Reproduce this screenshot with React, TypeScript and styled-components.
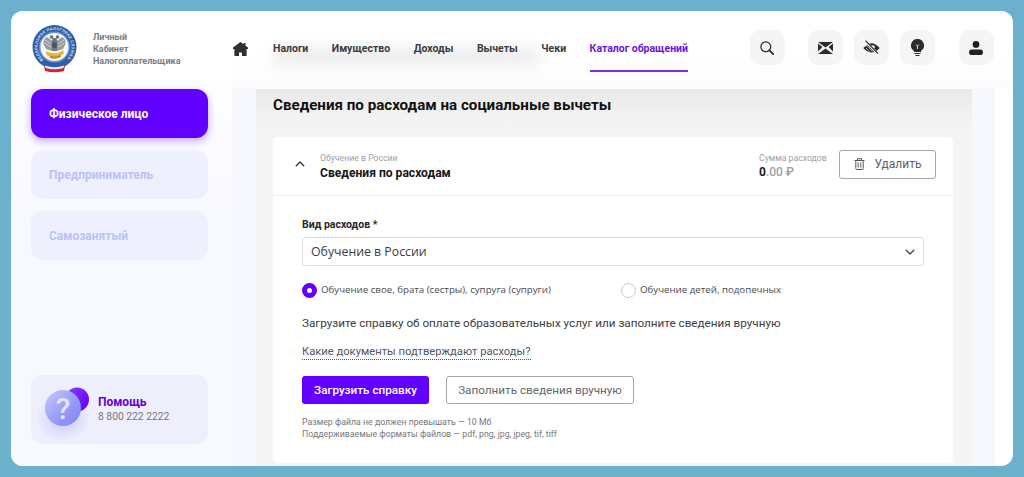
import React from 'react';
import styled, { createGlobalStyle } from 'styled-components';

const GlobalStyle = createGlobalStyle`
  html, body { margin: 0; padding: 0; height: 100%; overflow: hidden; }
  body { background: #6bb0cc; font-family: Roboto, "Liberation Sans", sans-serif; }
  * { box-sizing: border-box; }
`;

const Page = styled.div`
  height: 477px;
  padding: 11px 11px 11px 11px;
`;

const Window = styled.div`
  display: flex;
  width: 1002px;
  height: 455px;
  border-radius: 12px;
  overflow: hidden;
  background: #fff;
`;

const Sidebar = styled.aside`
  display: flex;
  flex-direction: column;
  width: 221px;
  padding: 0 24px 22px 20px;
  background: linear-gradient(180deg, #fff 0, #fff 60px, #f8f8ff 200px);
`;

const Brand = styled.div`
  display: flex;
  align-items: center;
  height: 78px;
  padding: 0 0 3px 1px;
  flex: none;
`;

const BrandText = styled.div`
  margin-left: 16px;
  font-size: 9px;
  font-weight: 700;
  line-height: 12px;
  color: #7b7b85;
`;

const SideNav = styled.nav`
  display: flex;
  flex-direction: column;
  gap: 12px;
`;

const SideItem = styled.div<{ $active?: boolean }>`
  display: flex;
  align-items: center;
  height: 49px;
  padding-left: 18px;
  border-radius: 12px;
  font-size: 12px;
  font-weight: 700;
  color: ${p => (p.$active ? '#fff' : '#bcc2f4')};
  background: ${p => (p.$active ? '#6200ff' : '#eff0fe')};
  box-shadow: ${p => (p.$active ? '0 3px 9px rgba(98, 0, 255, 0.35)' : 'none')};
`;

const HelpCard = styled.div`
  display: flex;
  align-items: center;
  gap: 9px;
  height: 69px;
  margin-top: auto;
  padding-left: 12px;
  border-radius: 12px;
  background: #efeffc;
`;

const HelpTitle = styled.div`
  font-size: 12px;
  font-weight: 700;
  line-height: 14px;
  color: #6200e0;
`;

const HelpPhone = styled.div`
  margin-top: 1px;
  font-size: 10.3px;
  line-height: 14px;
  color: #76767f;
`;

const Main = styled.div`
  display: flex;
  flex-direction: column;
  flex: 1;
  min-width: 0;
`;

const Header = styled.header`
  position: relative;
  display: flex;
  align-items: flex-start;
  height: 78px;
  flex: none;
  background: linear-gradient(180deg, #fff 0, #fff 50%, #fcfcfe 100%);
`;

const NavBlur = styled.div`
  position: absolute;
  left: 40px;
  top: 38px;
  width: 268px;
  height: 14px;
  border-radius: 8px;
  background: rgba(0, 0, 0, 0.09);
  filter: blur(8px);
`;

const HomeLink = styled.div`
  position: relative;
  width: 41px;
  height: 74px;
  padding: 30px 0 0 1px;
  flex: none;
`;

const TopNav = styled.nav`
  position: relative;
  display: flex;
  gap: 23.5px;
  height: 61px;
`;

const TopLink = styled.div<{ $active?: boolean }>`
  height: 100%;
  padding-top: 31px;
  font-size: 10.5px;
  font-weight: 700;
  line-height: 14px;
  color: ${p => (p.$active ? '#6a14e0' : '#3a3a40')};
  border-bottom: ${p => (p.$active ? '2px solid #7a2ce6' : 'none')};
`;

const Tools = styled.div`
  display: flex;
  margin-left: 61.5px;
  padding-top: 19px;
`;

const ToolButton = styled.div<{ $gap?: number }>`
  display: flex;
  align-items: center;
  justify-content: center;
  width: 35px;
  height: 35px;
  margin-left: ${p => p.$gap ?? 0}px;
  border-radius: 11px;
  background: #f5f5f6;
`;

const Content = styled.div`
  flex: 1;
  min-height: 0;
  width: 763px;
  padding: 0 23px 0 24px;
  background: #f7f7fe;
`;

const Panel = styled.section`
  height: 100%;
  padding: 0 19px 0 17px;
  background: linear-gradient(180deg, #e9e9e9 0, #f3f3f3 30px, #f5f5f5 60px);
`;

const PageTitle = styled.h1`
  margin: 0;
  height: 48px;
  padding-top: 7px;
  font-size: 15.15px;
  font-weight: 700;
  line-height: 18px;
  color: #111;
`;

const Card = styled.div`
  height: 326px;
  border-radius: 5px;
  background: #fff;
`;

const CardHead = styled.div`
  display: flex;
  align-items: center;
  height: 59px;
  padding: 0 17px 0 22px;
  border-bottom: 1px solid #eeeeee;
`;

const Collapse = styled.div`
  display: flex;
  margin-bottom: 4px;
`;

const CardHeadText = styled.div`
  margin-left: 15px;
  flex: 1;
`;

const Caption = styled.div`
  font-size: 8.7px;
  line-height: 12px;
  color: #a0a0a6;
`;

const CardTitle = styled.div`
  margin-top: 2px;
  font-size: 12.1px;
  font-weight: 700;
  line-height: 15px;
  color: #15151a;
`;

const Sum = styled.div`
  margin-right: 12px;
  width: 68px;
`;

const SumValue = styled.div`
  margin-top: 1px;
  font-size: 12px;
  line-height: 15px;
  color: #a0a0a6;
  font-weight: 500;
  b { color: #222; font-weight: 700; }
`;

const DeleteButton = styled.div`
  display: flex;
  align-items: center;
  justify-content: center;
  gap: 10px;
  width: 97px;
  height: 29px;
  margin-bottom: 4px;
  border: 1px solid #a5a5aa;
  border-radius: 3px;
  font-size: 12px;
  color: #5f5f66;
`;

const CardBody = styled.div`
  padding: 22px 29px 0;
`;

const FieldLabel = styled.div`
  font-size: 10.5px;
  font-weight: 700;
  line-height: 14px;
  color: #26262b;
`;

const Select = styled.div`
  display: flex;
  align-items: center;
  justify-content: space-between;
  height: 29px;
  margin-top: 5px;
  padding: 0 8px;
  border: 1px solid #dedee0;
  border-radius: 3px;
  font-family: "Open Sans", sans-serif;
  font-size: 12.3px;
  color: #3b3b40;
`;

const RadioRow = styled.div`
  display: grid;
  grid-template-columns: 319px 1fr;
  margin-top: 16px;
`;

const RadioOption = styled.div`
  display: flex;
  align-items: center;
  gap: 4px;
  font-family: "Open Sans", sans-serif;
  font-size: 9.7px;
  line-height: 16px;
  color: #4a4a50;
`;

const RadioMark = styled.span<{ $on?: boolean }>`
  width: 15px;
  height: 15px;
  flex: none;
  border-radius: 50%;
  background: ${p => (p.$on ? '#fff' : 'transparent')};
  border: ${p => (p.$on ? '5px solid #6200ff' : '1px solid #c9c9cc')};
`;

const Hint = styled.p`
  margin: 17px 0 0;
  font-size: 11.7px;
  line-height: 16px;
  color: #3c3c42;
`;

const DocLink = styled.span`
  display: inline-block;
  margin-top: 13px;
  font-size: 11.2px;
  line-height: 15px;
  color: #55555c;
  border-bottom: 1px dotted #55555c;
`;

const Actions = styled.div`
  display: flex;
  gap: 17px;
  margin-top: 16px;
`;

const ActionButton = styled.div<{ $primary?: boolean }>`
  display: flex;
  align-items: center;
  justify-content: center;
  width: ${p => (p.$primary ? 127 : 188)}px;
  height: 28px;
  border-radius: 3px;
  font-size: 11.7px;
  font-weight: ${p => (p.$primary ? 500 : 400)};
  color: ${p => (p.$primary ? '#fff' : '#66666c')};
  background: ${p => (p.$primary ? '#6200ff' : '#fff')};
  border: ${p => (p.$primary ? 'none' : '1px solid #a5a5aa')};
`;

const FileNote = styled.div`
  margin-top: 12px;
  font-size: 8.75px;
  line-height: 12px;
  color: #77777d;
`;

const NAV_ITEMS = ['Налоги', 'Имущество', 'Доходы', 'Вычеты', 'Чеки'];

function Emblem() {
  return (
    <svg width="45" height="49" viewBox="0 0 45 49">
      <defs>
        <path id="ring" d="M 11.6 36 A 17 17 0 1 1 33.4 36" />
      </defs>
      <path d="M12 42 Q22.5 46 33 42 L32 47 Q22.5 49.5 13 47 Z" fill="#e0202c" />
      <circle cx="22.5" cy="23" r="22" fill="#2f5ea8" />
      <path d="M13 41.5 Q22.5 45 32 41.5 L31.5 44 Q22.5 46.5 13.5 44 Z" fill="#e4e8f4" />
      <circle cx="22.5" cy="23" r="15.5" fill="#6f95cc" />
      <circle cx="22.5" cy="23" r="14" fill="#f8f8f4" />
      <text fontFamily="Roboto, sans-serif" fontSize="4" fontWeight="500" fill="#e8eef8">
        <textPath href="#ring" textLength="80">ФЕДЕРАЛЬНАЯ НАЛОГОВАЯ СЛУЖБА</textPath>
      </text>
      {/* wings */}
      <path d="M20 17 L15 13 Q11 15 11.5 20 L14 25 L20 27 Z" fill="#9599a2" />
      <path d="M25 17 L30 13 Q34 15 33.5 20 L31 25 L25 27 Z" fill="#9599a2" />
      <path d="M13 16 L19 20 M12.5 19 L19 23 M32 16 L26 20 M32.5 19 L26 23" stroke="#f8f8f4" strokeWidth="0.6" />
      {/* heads */}
      <circle cx="19.5" cy="13" r="1.8" fill="#6c717c" />
      <circle cx="25.5" cy="13" r="1.8" fill="#6c717c" />
      <path d="M20.5 14 L24.5 14 L25.5 19 L25 27 H20 L19.5 19 Z" fill="#70757f" />
      <rect x="20.5" y="18.5" width="4" height="5.5" rx="1" fill="#4b5160" />
      {/* gold band */}
      <path d="M14 27 Q22.5 32 31 26.5 L32 29.5 Q24 36 14.5 31 Z" fill="#e5b92f" />
      <path d="M18 31.5 Q24 34 28.5 30.5 L29 33 Q23 36 18 34 Z" fill="#c08c1c" />
    </svg>
  );
}

function HelpBadge() {
  return (
    <svg width="46" height="52" viewBox="0 0 46 52" style={{ overflow: 'visible' }}>
      <defs>
        <linearGradient id="back" x1="0" y1="0" x2="1" y2="1">
          <stop offset="0" stopColor="#8a3cff" />
          <stop offset="1" stopColor="#5c00f0" />
        </linearGradient>
        <linearGradient id="front" x1="0" y1="0" x2="1" y2="1">
          <stop offset="0" stopColor="#c8c9f8" />
          <stop offset="0.6" stopColor="#9499f6" />
          <stop offset="1" stopColor="#8083f0" />
        </linearGradient>
        <radialGradient id="glow">
          <stop offset="0" stopColor="#8a8cf5" stopOpacity="0.4" />
          <stop offset="1" stopColor="#8a8cf5" stopOpacity="0" />
        </radialGradient>
      </defs>
      <ellipse cx="20" cy="34" rx="28" ry="24" fill="url(#glow)" />
      <circle cx="34" cy="15.5" r="12" fill="url(#back)" />
      <circle cx="20" cy="24" r="18" fill="url(#front)" />
      <text x="20" y="35" textAnchor="middle" fontFamily="Roboto, sans-serif" fontSize="30" fontWeight="500" fill="#e2e3fb">?</text>
    </svg>
  );
}

function HomeIcon() {
  return (
    <svg width="15" height="14" viewBox="0 0 15 14" fill="#2f2f33">
      <path d="M7.5 0 L10.5 2.2 V1 H12.5 V3.7 L15 5.6 V7 H13.6 V14 H9 V10.6 H6 V14 H1.4 V7 H0 V5.6 Z" />
    </svg>
  );
}

function SearchIcon() {
  return (
    <svg width="14" height="14" viewBox="0 0 14 14" fill="none" stroke="#2b2b2f">
      <circle cx="5.8" cy="5.8" r="4.9" strokeWidth="1.3" />
      <path d="M9.4 9.4 L13.2 13.2" strokeWidth="1.8" strokeLinecap="round" />
    </svg>
  );
}

function MailIcon() {
  return (
    <svg width="15" height="12" viewBox="0 0 15 12" fill="#2b2b2f">
      <path d="M0 0 H15 L7.5 5.4 Z" />
      <path d="M0 12 H15 L7.5 6.6 Z" />
      <path d="M0 1.6 L4.4 5 L0 9.4 Z" />
      <path d="M15 1.6 L10.6 5 L15 9.4 Z" />
    </svg>
  );
}

function HiddenEyeIcon() {
  return (
    <svg width="17" height="15" viewBox="0 0 17 15">
      <path d="M0.3 8 Q8.5 -1.5 16.7 8 Q8.5 17 0.3 8 Z" fill="#2b2b2f" />
      <circle cx="10" cy="7" r="1.8" fill="#f5f5f6" />
      <path d="M3 8 L7 12.5 M1.8 7 L3.5 5 L9.4 11.6 M5 4 L11 11" stroke="#f5f5f6" strokeWidth="0.7" fill="none" />
      <path d="M2 0.8 L15 14" stroke="#f5f5f6" strokeWidth="2.4" />
      <path d="M2.5 0.6 L15 13.6" stroke="#2b2b2f" strokeWidth="1.2" />
    </svg>
  );
}

function BulbIcon() {
  return (
    <svg width="13" height="17" viewBox="0 0 13 17" fill="#2b2b2f">
      <path d="M6.5 0 A6.5 6.5 0 0 1 10 12 V13 H3 V12 A6.5 6.5 0 0 1 6.5 0 Z" />
      <path d="M3.5 14 H9.5 V15 H3.5 Z M4.5 16 H8.5 V17 H4.5 Z" />
      <path d="M5 5.5 L6.5 7 L8 5.5 M6.5 7 V10" stroke="#f5f5f6" strokeWidth="0.9" fill="none" />
    </svg>
  );
}

function UserIcon() {
  return (
    <svg width="14" height="14" viewBox="0 0 14 14" fill="#1f1f23">
      <circle cx="7" cy="3.4" r="3.4" />
      <rect x="0" y="8.4" width="14" height="5.6" rx="2.8" />
    </svg>
  );
}

function TrashIcon() {
  return (
    <svg width="11" height="12" viewBox="0 0 11 12" fill="none" stroke="#55555c" strokeWidth="1">
      <path d="M0.5 2.5 H10.5 M3.5 2.5 V0.7 H7.5 V2.5" />
      <rect x="1.8" y="2.5" width="7.4" height="9" rx="0.8" />
      <path d="M4.2 4.5 V9.5 M6.8 4.5 V9.5" />
    </svg>
  );
}

function Chevron({ up, color }: { up?: boolean; color: string }) {
  return (
    <svg width="10" height="6" viewBox="0 0 10 6" fill="none" stroke={color} strokeWidth="1.3">
      <path d={up ? 'M0.8 5.2 L5 1 L9.2 5.2' : 'M0.8 0.8 L5 5 L9.2 0.8'} />
    </svg>
  );
}

export default function App() {
  return (
    <Page>
      <GlobalStyle />
      <Window>
        <Sidebar>
          <Brand>
            <Emblem />
            <BrandText>
              Личный
              <br />
              Кабинет
              <br />
              Налогоплательщика
            </BrandText>
          </Brand>
          <SideNav>
            <SideItem $active>Физическое лицо</SideItem>
            <SideItem>Предприниматель</SideItem>
            <SideItem>Самозанятый</SideItem>
          </SideNav>
          <HelpCard>
            <HelpBadge />
            <div>
              <HelpTitle>Помощь</HelpTitle>
              <HelpPhone>8 800 222 2222</HelpPhone>
            </div>
          </HelpCard>
        </Sidebar>
        <Main>
          <Header>
            <NavBlur />
            <HomeLink>
              <HomeIcon />
            </HomeLink>
            <TopNav>
              {NAV_ITEMS.map(item => (
                <TopLink key={item}>{item}</TopLink>
              ))}
              <TopLink $active>Каталог обращений</TopLink>
            </TopNav>
            <Tools>
              <ToolButton>
                <SearchIcon />
              </ToolButton>
              <ToolButton $gap={23}>
                <MailIcon />
              </ToolButton>
              <ToolButton $gap={11}>
                <HiddenEyeIcon />
              </ToolButton>
              <ToolButton $gap={11}>
                <BulbIcon />
              </ToolButton>
              <ToolButton $gap={24}>
                <UserIcon />
              </ToolButton>
            </Tools>
          </Header>
          <Content>
            <Panel>
              <PageTitle>Сведения по расходам на социальные вычеты</PageTitle>
              <Card>
                <CardHead>
                  <Collapse>
                    <Chevron up color="#333" />
                  </Collapse>
                  <CardHeadText>
                    <Caption>Обучение в России</Caption>
                    <CardTitle>Сведения по расходам</CardTitle>
                  </CardHeadText>
                  <Sum>
                    <Caption>Сумма расходов</Caption>
                    <SumValue>
                      <b>0</b>.00 ₽
                    </SumValue>
                  </Sum>
                  <DeleteButton>
                    <TrashIcon />
                    Удалить
                  </DeleteButton>
                </CardHead>
                <CardBody>
                  <FieldLabel>Вид расходов *</FieldLabel>
                  <Select>
                    Обучение в России
                    <Chevron color="#444" />
                  </Select>
                  <RadioRow>
                    <RadioOption>
                      <RadioMark $on />
                      Обучение свое, брата (сестры), супруга (супруги)
                    </RadioOption>
                    <RadioOption>
                      <RadioMark />
                      Обучение детей, подопечных
                    </RadioOption>
                  </RadioRow>
                  <Hint>Загрузите справку об оплате образовательных услуг или заполните сведения вручную</Hint>
                  <DocLink>Какие документы подтверждают расходы?</DocLink>
                  <Actions>
                    <ActionButton $primary>Загрузить справку</ActionButton>
                    <ActionButton>Заполнить сведения вручную</ActionButton>
                  </Actions>
                  <FileNote>
                    Размер файла не должен превышать — 10 Мб
                    <br />
                    Поддерживаемые форматы файлов — pdf, png, jpg, jpeg, tif, tiff
                  </FileNote>
                </CardBody>
              </Card>
            </Panel>
          </Content>
        </Main>
      </Window>
    </Page>
  );
}
